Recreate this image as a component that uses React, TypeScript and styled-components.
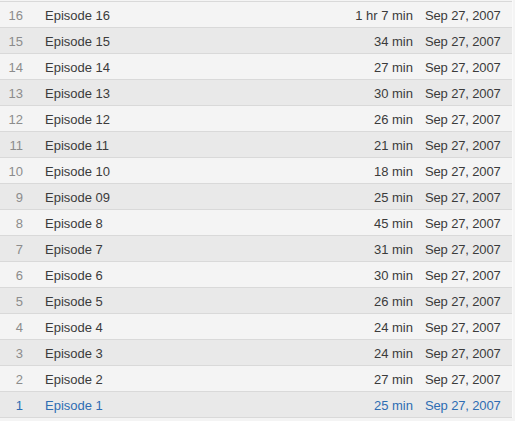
import React from "react";
import styled, { createGlobalStyle } from "styled-components";

const Global = createGlobalStyle`
  html, body { margin: 0; padding: 0; background: #f4f4f4; }
  body { font-family: "Liberation Sans", Arial, sans-serif; }
`;

const List = styled.div`
  width: 512px;
  padding-top: 1px;
  border-right: 1px solid #fafafa;
`;

const Row = styled.div<{ $alt: boolean; $active: boolean }>`
  display: grid;
  grid-template-columns: 23px 22px 1fr 120px 99px;
  align-items: center;
  height: 23px;
  padding-top: 2px;
  border-top: 1px solid #d9d9d9;
  background: ${(p) => (p.$alt ? "#e9e9e9" : "#f4f4f4")};
  font-size: 13px;
  color: ${(p) => (p.$active ? "#2e6db3" : "#3b3b3b")};
  &:last-child { border-bottom: 1px solid #d9d9d9; }
`;

const Num = styled.span<{ $active: boolean }>`
  text-align: right;
  color: ${(p) => (p.$active ? "#2e6db3" : "#8c8c8c")};
`;

const Title = styled.span`
  grid-column: 3;
  white-space: nowrap;
`;

const Dur = styled.span`
  text-align: right;
`;

const DateCell = styled.span`
  padding-left: 12px;
  white-space: nowrap;
  letter-spacing: -0.15px;
`;

const rows = [
  ["16", "Episode 16", "1 hr 7 min"],
  ["15", "Episode 15", "34 min"],
  ["14", "Episode 14", "27 min"],
  ["13", "Episode 13", "30 min"],
  ["12", "Episode 12", "26 min"],
  ["11", "Episode 11", "21 min"],
  ["10", "Episode 10", "18 min"],
  ["9", "Episode 09", "25 min"],
  ["8", "Episode 8", "45 min"],
  ["7", "Episode 7", "31 min"],
  ["6", "Episode 6", "30 min"],
  ["5", "Episode 5", "26 min"],
  ["4", "Episode 4", "24 min"],
  ["3", "Episode 3", "24 min"],
  ["2", "Episode 2", "27 min"],
  ["1", "Episode 1", "25 min"],
];

export default function App() {
  return (
    <>
      <Global />
      <List>
        {rows.map(([n, t, d], i) => {
          const active = n === "1";
          return (
            <Row key={n} $alt={i % 2 === 1} $active={active}>
              <Num $active={active}>{n}</Num>
              <Title>{t}</Title>
              <Dur>{d}</Dur>
              <DateCell>Sep 27, 2007</DateCell>
            </Row>
          );
        })}
      </List>
    </>
  );
}
